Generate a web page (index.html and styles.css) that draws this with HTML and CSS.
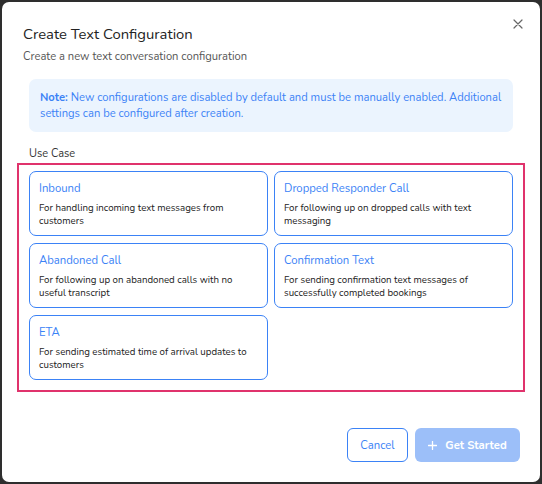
FILE: index.html
```html
<!DOCTYPE html>
<html>
<head>
<meta charset="utf-8">
<link rel="stylesheet" href="styles.css">
</head>
<body>
<div class="modal">
  <button class="close" aria-label="Close">
    <svg width="10" height="10" viewBox="0 0 10 10"><path d="M1 1L9 9M9 1L1 9" stroke="#666" stroke-width="1.2" stroke-linecap="round"/></svg>
  </button>
  <h1 class="title">Create Text Configuration</h1>
  <p class="subtitle">Create a new text conversation configuration</p>
  <div class="note"><b>Note:</b> New configurations are disabled by default and must be manually enabled. Additional settings can be configured after creation.</div>
  <div class="label">Use Case</div>
  <div class="usecases">
    <div class="card"><div class="card-title">Inbound</div><div class="card-desc">For handling incoming text messages from customers</div></div>
    <div class="card"><div class="card-title">Dropped Responder Call</div><div class="card-desc">For following up on dropped calls with text messaging</div></div>
    <div class="card"><div class="card-title">Abandoned Call</div><div class="card-desc">For following up on abandoned calls with no useful transcript</div></div>
    <div class="card"><div class="card-title">Confirmation Text</div><div class="card-desc">For sending confirmation text messages of successfully completed bookings</div></div>
    <div class="card"><div class="card-title">ETA</div><div class="card-desc">For sending estimated time of arrival updates to customers</div></div>
  </div>
  <div class="footer">
    <button class="btn cancel">Cancel</button>
    <button class="btn primary"><svg class="plus" width="9" height="9" viewBox="0 0 9 9"><path d="M4.5 0.5V8.5M0.5 4.5H8.5" stroke="#fff" stroke-width="1.3" stroke-linecap="round"/></svg>Get Started</button>
  </div>
</div>
</body>
</html>
```
FILE: styles.css
```css
html, body { margin: 0; padding: 0; }
body {
  background: #2e2e2e;
  width: 542px;
  height: 484px;
  font-family: "Nunito", "Lato", "Noto Sans", sans-serif;
  padding: 2px;
  box-sizing: border-box;
}
.modal {
  position: relative;
  background: #fff;
  border-radius: 7px;
  height: 480px;
  box-sizing: border-box;
  padding: 22px 15px 0 21px;
  display: flex;
  flex-direction: column;
}
.close {
  position: absolute;
  top: 17px;
  right: 17px;
  border: 0;
  background: none;
  padding: 0;
  width: 10px;
  height: 10px;
  display: flex;
}
.title {
  margin: 0;
  font-size: 14.8px;
  font-weight: 400;
  color: #222;
  line-height: 20px;
}
.subtitle {
  margin: 5px 0 0;
  font-size: 11.2px;
  color: #555;
  line-height: 16px;
}
.note {
  margin: 14px 12px 0 6px;
  background: #ebf4fe;
  border-radius: 7px;
  padding: 11px 10px 10px 11px;
  font-size: 11.2px;
  line-height: 16px;
  color: #3b82f6;
}
.note b { font-weight: 700; }
.label {
  margin: 14px 0 0 6px;
  font-size: 11px;
  color: #333;
  line-height: 16px;
}
.usecases {
  margin: 1px 0 0 -6px;
  border: 2px solid #e0336c;
  padding: 6px 10px 10px 10px;
  display: grid;
  grid-template-columns: 1fr 1fr;
  gap: 7px 6px;
}
.card {
  border: 1px solid #3b82f6;
  border-radius: 7px;
  height: 65px;
  box-sizing: border-box;
  padding: 9px 9px;
}
.card-title {
  font-size: 11.3px;
  color: #3b82f6;
  line-height: 16px;
}
.card-desc {
  margin-top: 5px;
  font-size: 9.7px;
  color: #222;
  line-height: 12.5px;
}
.footer {
  margin-top: 36px;
  display: flex;
  justify-content: flex-end;
  gap: 7px;
  padding-right: 5px;
}
.btn {
  height: 34px;
  border-radius: 6px;
  font-family: inherit;
  font-size: 11.3px;
  padding: 0;
  white-space: nowrap;
  display: flex;
  align-items: center;
  justify-content: center;
}
.cancel {
  background: #fff;
  border: 1px solid #3b82f6;
  color: #3b82f6;
  width: 61px;
}
.primary {
  background: #9cbff9;
  border: 0;
  color: #fff;
  font-weight: 700;
  width: 105px;
}
.plus { margin-right: 8px; }
```
